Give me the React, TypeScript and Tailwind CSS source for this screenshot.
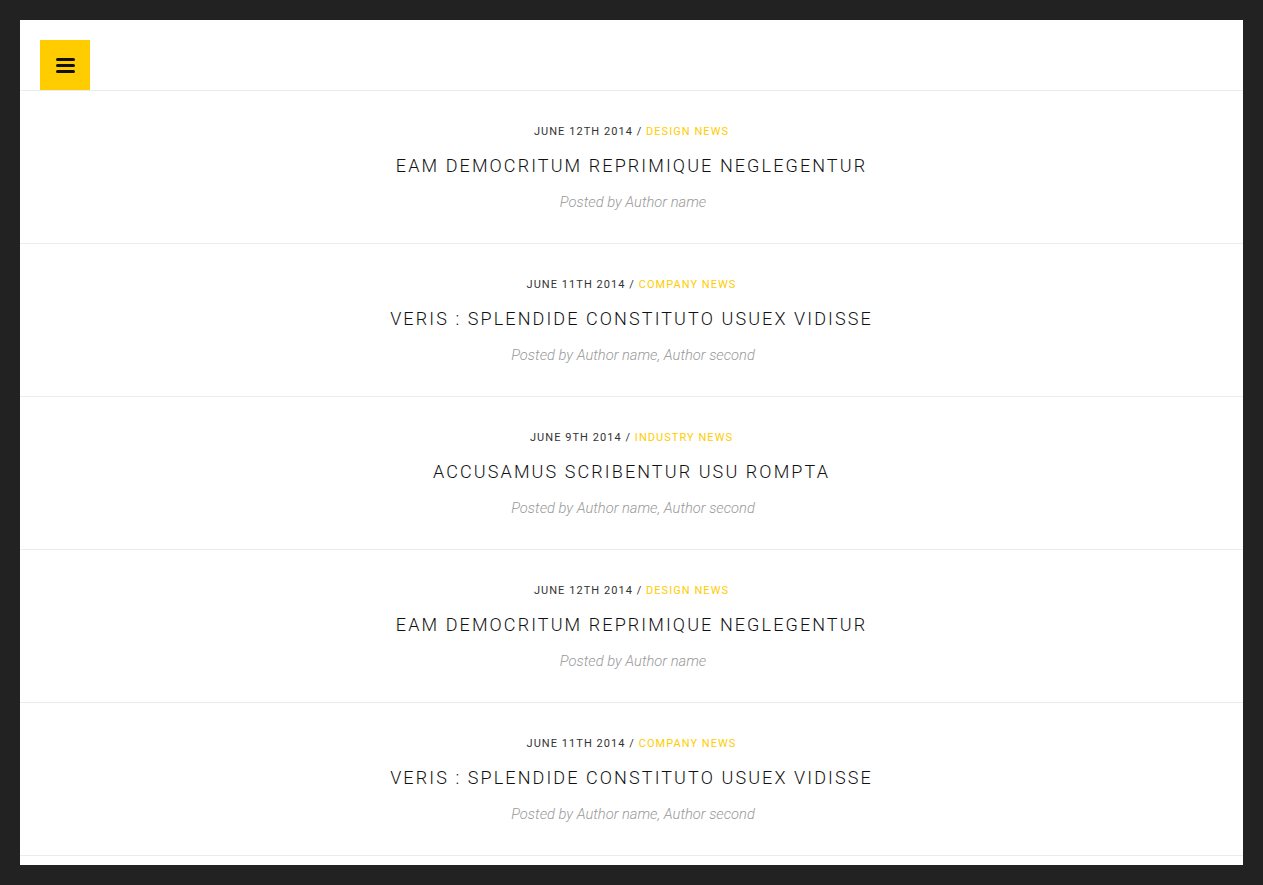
import React from "react";

const posts = [
  { date: "JUNE 12TH 2014", cat: "DESIGN NEWS", title: "EAM DEMOCRITUM REPRIMIQUE NEGLEGENTUR", by: "Posted by Author name" },
  { date: "JUNE 11TH 2014", cat: "COMPANY NEWS", title: "VERIS : SPLENDIDE CONSTITUTO USUEX VIDISSE", by: "Posted by Author name, Author second" },
  { date: "JUNE 9TH 2014", cat: "INDUSTRY NEWS", title: "ACCUSAMUS SCRIBENTUR USU ROMPTA", by: "Posted by Author name, Author second" },
  { date: "JUNE 12TH 2014", cat: "DESIGN NEWS", title: "EAM DEMOCRITUM REPRIMIQUE NEGLEGENTUR", by: "Posted by Author name" },
  { date: "JUNE 11TH 2014", cat: "COMPANY NEWS", title: "VERIS : SPLENDIDE CONSTITUTO USUEX VIDISSE", by: "Posted by Author name, Author second" },
];

export default function App() {
  return (
    <div className="h-[885px] w-full bg-[#222222] p-5 font-['Roboto',sans-serif]">
      <div className="h-full w-full overflow-hidden bg-white">
        <div className="h-[71px] border-b border-[#ececec] px-5 pt-5">
          <div className="flex h-[50px] w-[50px] flex-col items-center justify-center gap-[3px] bg-[#ffcc00]">
            <span className="block h-[3px] w-[19px] rounded-full bg-[#111]" />
            <span className="block h-[3px] w-[19px] rounded-full bg-[#111]" />
            <span className="block h-[3px] w-[19px] rounded-full bg-[#111]" />
          </div>
        </div>
        {posts.map((p, i) => (
          <div key={i} className="flex h-[153px] flex-col items-center border-b border-[#ececec] pt-[33px] text-center">
            <div className="h-[16px] text-[11px] font-normal leading-[16px] tracking-[1.05px] text-[#333]">
              {p.date} / <span className="text-[#ffcc00]">{p.cat}</span>
            </div>
            <div className="mt-[9px] h-[34px] text-[18px] font-light leading-[34px] tracking-[2.1px] text-[#111]">
              {p.title}
            </div>
            <div className="mt-[9px] pl-[3px] text-[14.7px] font-light italic leading-[20px] text-[#999]">{p.by}</div>
          </div>
        ))}
      </div>
    </div>
  );
}
